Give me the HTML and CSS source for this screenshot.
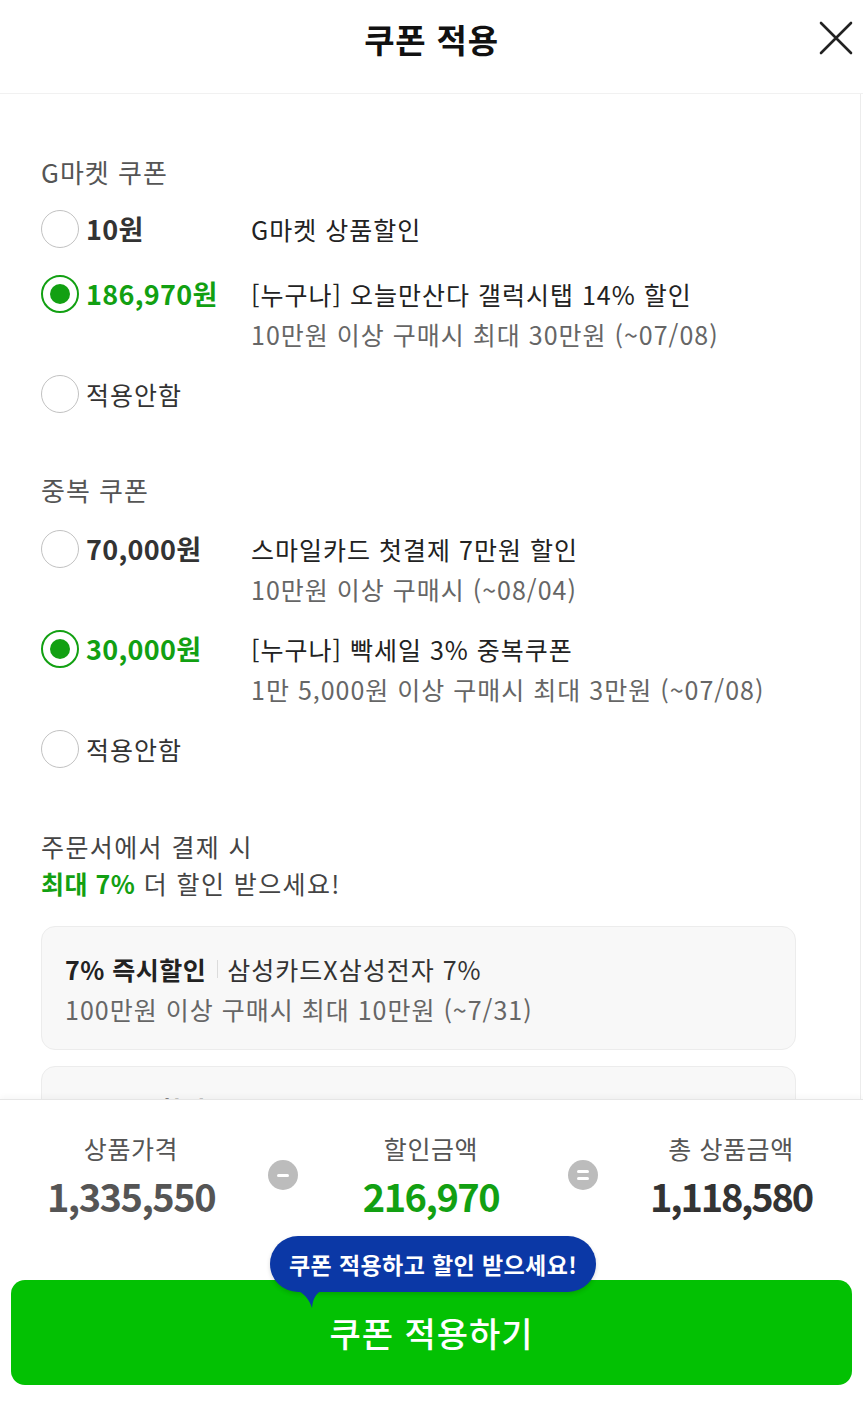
FILE: index.html
```html
<!DOCTYPE html>
<html lang="ko">
<head>
<meta charset="utf-8">
<title>쿠폰 적용</title>
<link rel="stylesheet" href="styles.css">
</head>
<body>
<div class="sheet">
  <header class="header">
    <h1 class="title">쿠폰 적용</h1>
    <button class="close" aria-label="닫기">
      <svg width="34" height="34" viewBox="0 0 34 34"><path d="M2 2 L32 32 M32 2 L2 32" stroke="#222" stroke-width="2.6" stroke-linecap="round" fill="none"/></svg>
    </button>
  </header>

  <main class="content">
    <section class="group">
      <h2 class="group-title">G마켓 쿠폰</h2>
      <div class="rows">
        <label class="row">
          <span class="pick"><span class="radio"></span><span class="amount">10원</span></span>
          <span class="desc"><span class="main">G마켓 상품할인</span></span>
        </label>
        <label class="row">
          <span class="pick"><span class="radio on"></span><span class="amount green">186,970원</span></span>
          <span class="desc"><span class="main">[누구나] 오늘만산다 갤럭시탭 14% 할인</span><span class="sub">10만원 이상 구매시 최대 30만원 (~07/08)</span></span>
        </label>
        <label class="row">
          <span class="pick"><span class="radio"></span><span class="none">적용안함</span></span>
        </label>
      </div>
    </section>

    <section class="group">
      <h2 class="group-title">중복 쿠폰</h2>
      <div class="rows">
        <label class="row">
          <span class="pick"><span class="radio"></span><span class="amount">70,000원</span></span>
          <span class="desc"><span class="main">스마일카드 첫결제 7만원 할인</span><span class="sub">10만원 이상 구매시 (~08/04)</span></span>
        </label>
        <label class="row">
          <span class="pick"><span class="radio on"></span><span class="amount green">30,000원</span></span>
          <span class="desc"><span class="main">[누구나] 빡세일 3% 중복쿠폰</span><span class="sub">1만 5,000원 이상 구매시 최대 3만원 (~07/08)</span></span>
        </label>
        <label class="row">
          <span class="pick"><span class="radio"></span><span class="none">적용안함</span></span>
        </label>
      </div>
    </section>

    <section class="promo">
      <p class="promo-text">주문서에서 결제 시<br><strong>최대 7%</strong> 더 할인 받으세요!</p>
      <div class="card">
        <p class="card-main"><strong>7% 즉시할인</strong><span class="bar"></span>삼성카드X삼성전자 7%</p>
        <p class="card-sub">100만원 이상 구매시 최대 10만원 (~7/31)</p>
      </div>
      <div class="card">
        <p class="card-main"><strong>5% 즉시할인</strong><span class="bar"></span>스마일카드 스마일페이</p>
        <p class="card-sub">10만원 이상 구매시 최대 5만원</p>
      </div>
    </section>
  </main>

  <footer class="footer">
    <div class="summary">
      <div class="col">
        <span class="label">상품가격</span>
        <span class="value">1,335,550</span>
      </div>
      <span class="op"><span class="minus"></span></span>
      <div class="col">
        <span class="label">할인금액</span>
        <span class="value green">216,970</span>
      </div>
      <span class="op"><span class="eq"></span></span>
      <div class="col">
        <span class="label">총 상품금액</span>
        <span class="value dark">1,118,580</span>
      </div>
    </div>
    <div class="cta">
      <div class="tip">쿠폰 적용하고 할인 받으세요!
        <svg class="tail" width="26" height="18" viewBox="0 0 26 18"><path d="M0 0 L26 0 C20 4 17 8 16 18 C13 9 8 3 0 0 Z" fill="#0b38a6"/></svg>
      </div>
      <button class="apply">쿠폰 적용하기</button>
    </div>
  </footer>
</div>
</body>
</html>
```

FILE: styles.css
```css
* { box-sizing: border-box; }
html, body { margin: 0; padding: 0; background: #fff; }
body {
  font-family: "Noto Sans CJK KR", "Noto Sans", sans-serif;
  color: #222;
}
p, h1, h2 { margin: 0; }

.sheet {
  display: flex;
  flex-direction: column;
  height: 1407px;
  width: 863px;
  overflow: hidden;
}

.header {
  position: relative;
  height: 94px;
  flex: none;
  border-bottom: 1px solid #f1f1f1;
  display: flex;
  align-items: flex-start;
  justify-content: center;
}
.title {
  font-size: 33px;
  font-weight: 700;
  line-height: 40px;
  margin-top: 19px;
  color: #111;
  letter-spacing: 0.8px;
}
.close {
  position: absolute;
  right: 10px;
  top: 21px;
  border: 0;
  background: none;
  padding: 0;
  width: 34px;
  height: 34px;
}

.content {
  flex: 1;
  overflow: hidden;
  padding: 61px 64px 0 41px;
  margin-right: 2px;
  border-right: 1px solid #ececec;
}

.group { margin-bottom: 54px; }
.group-title {
  font-size: 26px;
  font-weight: 400;
  line-height: 34px;
  color: #555;
  letter-spacing: 1px;
  margin-bottom: 20px;
}
.group + .group .group-title { margin-bottom: 22px; }

.rows {
  display: flex;
  flex-direction: column;
  gap: 20px;
}
.row {
  display: grid;
  grid-template-columns: 210px 1fr;
  min-height: 45px;
  align-items: start;
}
.pick {
  display: flex;
  align-items: center;
  gap: 7px;
  height: 40px;
}
.radio {
  width: 38px;
  height: 38px;
  border-radius: 50%;
  border: 1.5px solid #c2c2c2;
  background: #fff;
  flex: none;
  position: relative;
}
.radio.on {
  border: 2px solid #12a012;
}
.radio.on::after {
  content: "";
  position: absolute;
  left: 50%;
  top: 50%;
  width: 20px;
  height: 20px;
  margin: -10px 0 0 -10px;
  border-radius: 50%;
  background: #12a012;
}
.amount {
  font-size: 27px;
  font-weight: 700;
  color: #333;
  letter-spacing: 0.3px;
  line-height: 40px;
}
.amount.green { color: #12a012; }
.none {
  font-size: 25px;
  color: #333;
  letter-spacing: 1px;
  line-height: 40px;
}
.desc {
  display: flex;
  flex-direction: column;
  font-size: 25px;
  letter-spacing: 1px;
  line-height: 40px;
}
.main { color: #222; }
.sub { color: #666; }

.promo-text {
  font-size: 25px;
  line-height: 37px;
  letter-spacing: 1.4px;
  color: #444;
}
.promo-text strong { color: #12a012; font-weight: 700; letter-spacing: 0.5px; }

.card {
  margin-top: 24px;
  background: #f8f8f8;
  border: 1px solid #ececec;
  border-radius: 14px;
  padding: 22px 23px 20px;
  font-size: 25px;
  letter-spacing: 1px;
  line-height: 40px;
}
.card + .card { margin-top: 16px; }
.card-main {
  display: flex;
  align-items: center;
  color: #333;
}
.card-main strong { color: #222; font-weight: 700; letter-spacing: 0.5px; }
.bar {
  display: inline-block;
  width: 1px;
  height: 18px;
  background: #dcdcdc;
  margin: 0 9px 0 11px;
}
.card-sub { color: #666; }

.footer {
  flex: none;
  height: 308px;
  border-top: 1px solid #e6e6e6;
  box-shadow: 0 -2px 6px rgba(0,0,0,0.04);
  padding: 31px 11px 22px;
  background: #fff;
  position: relative;
  z-index: 1;
}
.summary {
  display: grid;
  grid-template-columns: 240px 60px 240px 60px 240px;
  align-items: center;
}
.col {
  display: flex;
  flex-direction: column;
  align-items: center;
}
.label {
  font-size: 25px;
  line-height: 34px;
  letter-spacing: 0.6px;
  color: #555;
}
.value {
  margin-top: 8px;
  font-size: 38px;
  line-height: 46px;
  font-weight: 700;
  color: #555;
  letter-spacing: -1.5px;
}
.value.green { color: #12a012; }
.value.dark { color: #333; letter-spacing: -2.2px; }
.op {
  display: flex;
  justify-content: center;
  padding-left: 4px;
}
.minus, .eq {
  width: 30px;
  height: 30px;
  border-radius: 50%;
  background: #bcbcbc;
  position: relative;
}
.minus::after {
  content: "";
  position: absolute;
  left: 9px; right: 9px; top: 14px;
  height: 3px;
  background: #fff;
  border-radius: 2px;
}
.eq::before, .eq::after {
  content: "";
  position: absolute;
  left: 9px; right: 9px;
  height: 3px;
  background: #fff;
  border-radius: 2px;
}
.eq::before { top: 10px; }
.eq::after { top: 17px; }

.cta {
  position: relative;
  margin-top: 61px;
}
.apply {
  display: block;
  width: 100%;
  height: 105px;
  border: 0;
  border-radius: 14px;
  background: #03c103;
  color: #fff;
  font-family: inherit;
  font-size: 34px;
  font-weight: 500;
  letter-spacing: 1px;
  padding-bottom: 2px;
}
.tip {
  position: absolute;
  left: 259px;
  top: -44px;
  height: 56px;
  padding: 0 19px;
  border-radius: 28px;
  background: #0b38a6;
  color: #fff;
  font-size: 23px;
  font-weight: 700;
  line-height: 56px;
  letter-spacing: 0.4px;
  white-space: nowrap;
  box-shadow: 0 2px 4px rgba(0,0,0,0.15);
  z-index: 2;
}
.tail {
  position: absolute;
  left: 26px;
  top: 54px;
}
```
